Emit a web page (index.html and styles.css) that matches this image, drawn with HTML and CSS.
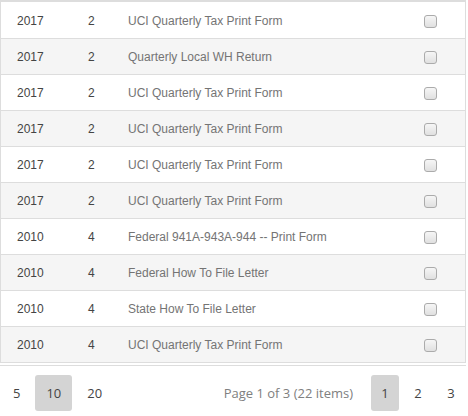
FILE: index.html
```html
<!DOCTYPE html>
<html>
<head>
<meta charset="utf-8">
<link rel="stylesheet" href="styles.css">
</head>
<body>
<div class="grid">
  <div class="rows">
    <div class="row"><span class="c-year">2017</span><span class="c-q">2</span><span class="c-title">UCI Quarterly Tax Print Form</span><span class="c-check"><input type="checkbox" class="cb"></span></div>
    <div class="row alt"><span class="c-year">2017</span><span class="c-q">2</span><span class="c-title">Quarterly Local WH Return</span><span class="c-check"><input type="checkbox" class="cb"></span></div>
    <div class="row"><span class="c-year">2017</span><span class="c-q">2</span><span class="c-title">UCI Quarterly Tax Print Form</span><span class="c-check"><input type="checkbox" class="cb"></span></div>
    <div class="row alt"><span class="c-year">2017</span><span class="c-q">2</span><span class="c-title">UCI Quarterly Tax Print Form</span><span class="c-check"><input type="checkbox" class="cb"></span></div>
    <div class="row"><span class="c-year">2017</span><span class="c-q">2</span><span class="c-title">UCI Quarterly Tax Print Form</span><span class="c-check"><input type="checkbox" class="cb"></span></div>
    <div class="row alt"><span class="c-year">2017</span><span class="c-q">2</span><span class="c-title">UCI Quarterly Tax Print Form</span><span class="c-check"><input type="checkbox" class="cb"></span></div>
    <div class="row"><span class="c-year">2010</span><span class="c-q">4</span><span class="c-title">Federal 941A-943A-944 -- Print Form</span><span class="c-check"><input type="checkbox" class="cb"></span></div>
    <div class="row alt"><span class="c-year">2010</span><span class="c-q">4</span><span class="c-title">Federal How To File Letter</span><span class="c-check"><input type="checkbox" class="cb"></span></div>
    <div class="row"><span class="c-year">2010</span><span class="c-q">4</span><span class="c-title">State How To File Letter</span><span class="c-check"><input type="checkbox" class="cb"></span></div>
    <div class="row alt"><span class="c-year">2010</span><span class="c-q">4</span><span class="c-title">UCI Quarterly Tax Print Form</span><span class="c-check"><input type="checkbox" class="cb"></span></div>
  </div>
  <div class="pager">
    <div class="sizes">
      <span class="pbtn">5</span>
      <span class="pbtn sel">10</span>
      <span class="pbtn">20</span>
    </div>
    <div class="pages">
      <span class="info">Page 1 of 3 (22 items)</span>
      <span class="pbtn num sel">1</span>
      <span class="pbtn num">2</span>
      <span class="pbtn num">3</span>
    </div>
  </div>
</div>
</body>
</html>
```

FILE: styles.css
```css
html, body {
  margin: 0;
  padding: 0;
  background: #fff;
}
.grid {
  width: 466px;
  font-family: "Liberation Sans", Arial, sans-serif;
  font-size: 12px;
}
.rows {
  border: 1px solid #ddd;
  border-top: 2px solid #ddd;
  padding-top: 1px;
}
.row {
  display: grid;
  grid-template-columns: 71px 40px 296px 56px;
  height: 35px;
  align-items: center;
  border-bottom: 1px solid #ddd;
}
.row:last-child {
  border-bottom: none;
}
.row.alt {
  background: #f5f5f5;
}
.row > span {
  padding-left: 16px;
  white-space: nowrap;
}
.c-year, .c-q {
  color: #444;
}
.c-title {
  color: #747474;
}
.c-check {
  display: flex;
  align-items: center;
}
.cb {
  appearance: none;
  -webkit-appearance: none;
  margin: 0;
  width: 13px;
  height: 13px;
  box-sizing: border-box;
  border: 1px solid #ababab;
  border-radius: 3px;
  background: linear-gradient(#f6f6f6, #e0e0e0);
  position: relative;
  top: 1px;
}
.pager {
  margin-top: 2px;
  border-top: 1px solid #ddd;
  display: flex;
  justify-content: space-between;
  align-items: center;
  padding: 9px 1px 0 2px;
  font-family: "Open Sans", sans-serif;
  font-size: 13px;
  color: #444;
}
.sizes, .pages {
  display: flex;
  align-items: center;
  gap: 4px;
}
.pbtn {
  display: block;
  height: 36px;
  line-height: 36px;
  padding: 0 11px;
  border-radius: 3px;
  box-sizing: border-box;
  min-width: 28px;
  text-align: center;
}
.pbtn.num {
  width: 28px;
  padding: 0;
}
.pages {
  gap: 5px;
}
.pbtn.sel {
  background: #d4d4d4;
}
.info {
  color: #808080;
  margin-right: 13px;
}
```
